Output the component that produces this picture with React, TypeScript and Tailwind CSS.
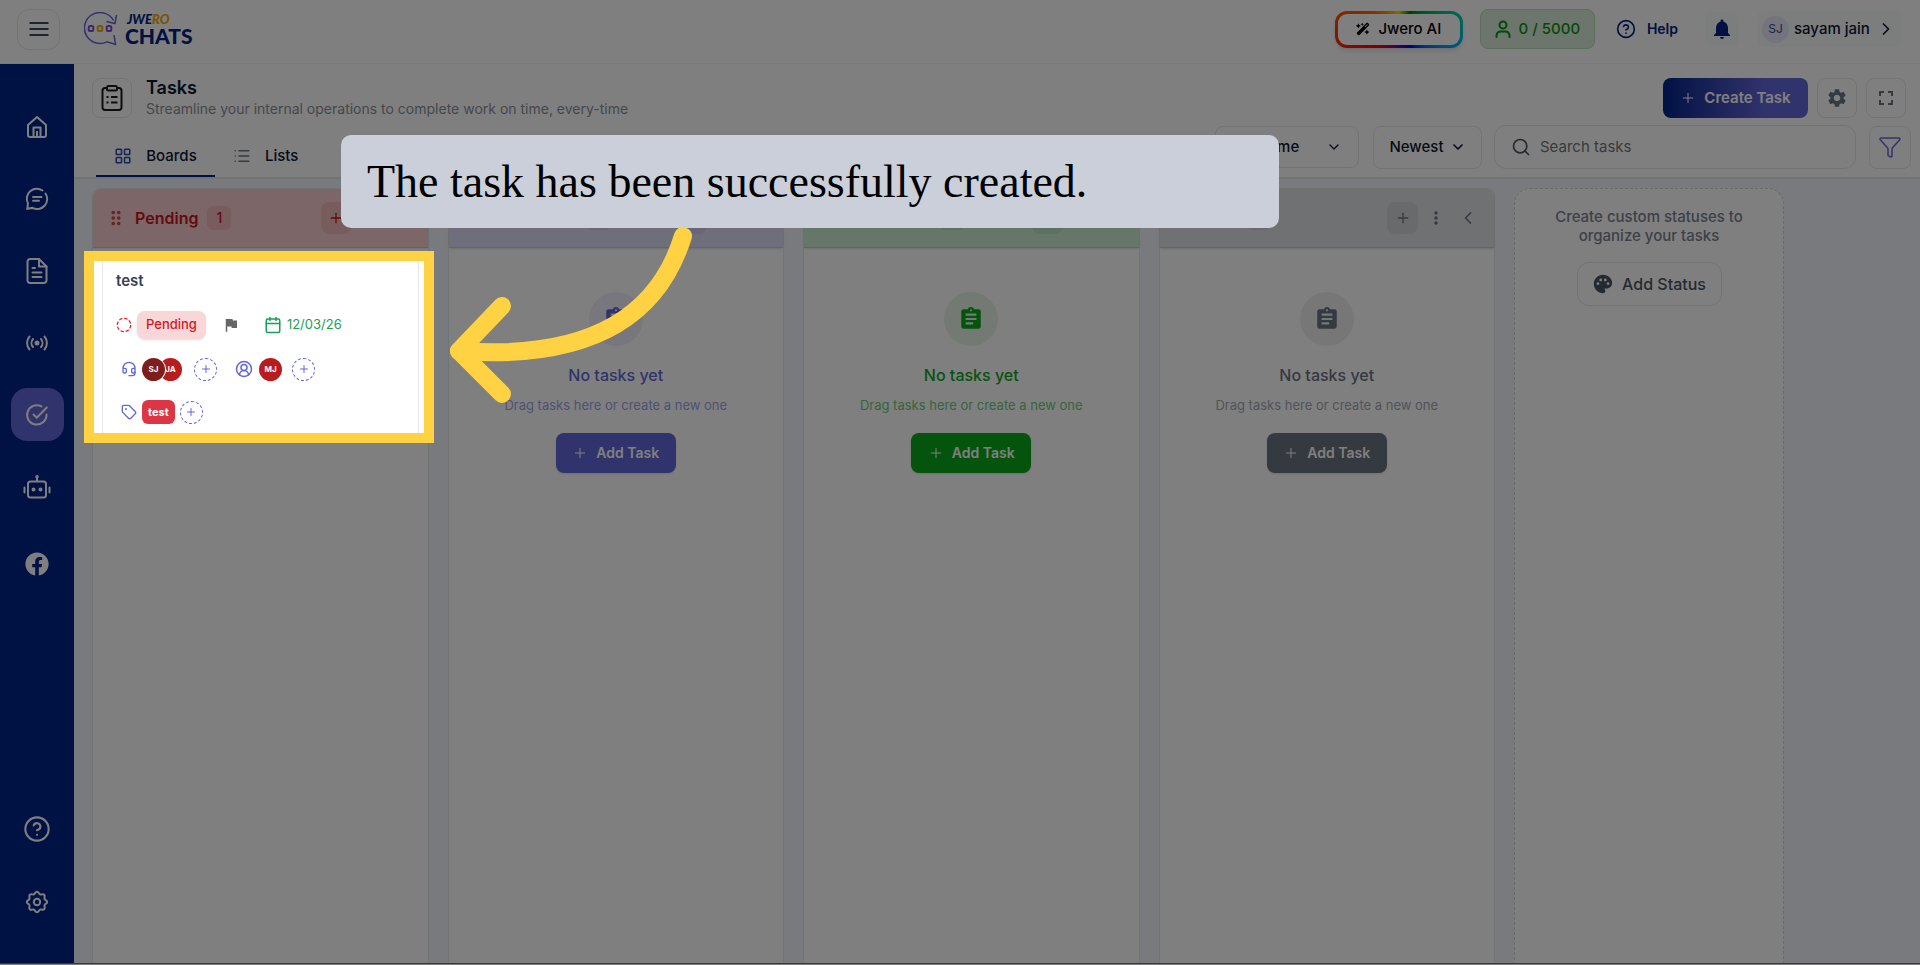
import type { ReactNode } from "react";
import {
  Calendar,
  ChevronDown,
  ChevronLeft,
  ChevronRight,
  CircleHelp,
  CircleUserRound,
  Funnel,
  Headset,
  LayoutGrid,
  List,
  Plus,
  Search,
  Tag,
} from "lucide-react";
import { FaFacebook } from "react-icons/fa";
import { FaWandMagicSparkles } from "react-icons/fa6";
import {
  MdAssignment,
  MdDragIndicator,
  MdFlag,
  MdFullscreen,
  MdMoreVert,
  MdNotifications,
  MdPalette,
  MdSettings,
} from "react-icons/md";

const HomeIcon = () => (
  <svg viewBox="0 0 24 24" className="size-6" fill="none" stroke="currentColor" strokeWidth="2" strokeLinejoin="round">
    <path d="M3 10 12 2l9 8v10a2 2 0 0 1-2 2H5a2 2 0 0 1-2-2z" />
    <path d="M8.500 22v-9.500h7V22M12 16v6" />
  </svg>
);

const ChatIcon = () => (
  <svg viewBox="0 0 24 24" className="size-6" fill="none" stroke="currentColor" strokeWidth="2" strokeLinecap="round">
    <path d="M17.500 3.500A10 10 0 0 0 3 16.500L2.300 21.700l5.200-.8A10 10 0 0 0 20.500 6.500" />
    <path d="M8 10h8.500M8 13.800h6" />
  </svg>
);

const DocIcon = () => (
  <svg viewBox="0 0 24 28" className="h-7 w-6" fill="none" stroke="currentColor" strokeWidth="2" strokeLinecap="round" strokeLinejoin="round">
    <path d="M14 2H5a2.500 2.500 0 0 0-2.500 2.500v19A2.500 2.500 0 0 0 5 26h14a2.500 2.500 0 0 0 2.500-2.500V9.500z" />
    <path d="M14 2v7.500h7.500M7.500 11h2.500M7.500 15.500h9M7.500 20h9" />
  </svg>
);

const BroadcastIcon = () => (
  <svg viewBox="0 0 24 24" className="size-6" fill="none" stroke="currentColor" strokeWidth="2" strokeLinecap="round">
    <circle cx="12" cy="12" r="1.500" fill="currentColor" />
    <path d="M8 8a6 6 0 0 0 0 8M16 8a6 6 0 0 1 0 8M4.500 5.500a10 10 0 0 0 0 13M19.500 5.500a10 10 0 0 1 0 13" />
  </svg>
);

const TaskIcon = () => (
  <svg viewBox="0 0 24 24" className="size-6" fill="none" stroke="currentColor" strokeWidth="2" strokeLinecap="round" strokeLinejoin="round">
    <path d="M21.500 11.500A9.700 9.700 0 1 1 16.500 3.400" />
    <path d="m8.500 11.500 3.200 3.300L21.800 4.500" />
  </svg>
);

const BotIcon = () => (
  <svg viewBox="0 0 28 24" className="h-6 w-7" fill="none" stroke="currentColor" strokeWidth="2" strokeLinecap="round">
    <rect x="5" y="6.500" width="18" height="16" rx="2.500" />
    <path d="M14 6V2.500M1.500 12.500v5M26.500 12.500v5" />
    <circle cx="14" cy="1.800" r=".8" />
    <circle cx="10.500" cy="14.500" r="1" fill="currentColor" />
    <circle cx="17.500" cy="14.500" r="1" fill="currentColor" />
  </svg>
);

const GearIcon = () => (
  <svg viewBox="0 0 24 24" className="size-6" fill="none" stroke="currentColor" strokeWidth="2" strokeLinejoin="round">
    <path d="M8.900 4.400C10.200 4 10 1.800 12 1.800s1.800 2.200 3.100 2.600c1.200.6 2.700-1.100 4.100.4s-.3 2.900.4 4.100c.4 1.300 2.600 1.100 2.600 3.100s-2.200 1.800-2.600 3.100c-.7 1.200 1.100 2.700-.4 4.100s-2.900-.3-4.100.4c-1.300.4-1.100 2.600-3.100 2.600s-1.800-2.200-3.100-2.600c-1.200-.7-2.700 1.100-4.100-.4s.3-2.900-.4-4.100c-.4-1.300-2.600-1.100-2.600-3.100s2.200-1.800 2.600-3.100c.7-1.200-1.100-2.700.4-4.100s2.900.2 4.100-.4z" />
    <circle cx="12" cy="12" r="3.200" />
  </svg>
);

const ClipboardIcon = () => (
  <svg viewBox="0 0 24 28" className="h-7 w-6" fill="none" stroke="currentColor" strokeWidth="2">
    <path d="M7 4H5a2.500 2.500 0 0 0-2.500 2.500v17A2.500 2.500 0 0 0 5 26h14a2.500 2.500 0 0 0 2.500-2.500v-17A2.500 2.500 0 0 0 19 4h-2" />
    <rect x="7" y="2" width="10" height="4.500" rx="1.500" />
    <path d="M6.500 13h2M11 13h6.500M6.500 18.500h2M11 18.500h6.500" />
  </svg>
);

const Logo = () => (
  <a href="#" aria-label="Jwero Chats" className="flex items-center gap-[7px]">
    <svg viewBox="0 0 34 34" className="size-[34px]" fill="none" strokeWidth="1.500">
      <path d="M29.500 8.500A15.500 15.500 0 1 0 23 29.800l8.500 2.700-1.500-9.500" stroke="#6366d8" />
      <path d="m22.500 9.500 8.500 2L32.500 3" stroke="#6366d8" />
      <rect x="4.700" y="14" width="4.600" height="5" rx="1.500" stroke="#7c4fd0" strokeWidth="2" />
      <rect x="13.700" y="14" width="4.600" height="5" rx="1.500" stroke="#f5a800" strokeWidth="2" />
      <rect x="22.700" y="14" width="4.600" height="5" rx="1.500" stroke="#7c4fd0" strokeWidth="2" />
    </svg>
    <span className="flex flex-col font-[Lato] font-black text-[#002288]">
      <span className="pl-[2px] text-[13px] leading-[14px] italic">
        JWE<span className="text-[#f5a800]">RO</span>
      </span>
      <span className="text-[21px] leading-5">CHATS</span>
    </span>
  </a>
);

const navItems = [
  { label: "Home", icon: <HomeIcon /> },
  { label: "Chats", icon: <ChatIcon /> },
  { label: "Templates", icon: <DocIcon /> },
  { label: "Broadcast", icon: <BroadcastIcon /> },
  { label: "Tasks", icon: <TaskIcon />, active: true },
  { label: "Bots", icon: <BotIcon /> },
];

const NavLink = ({ label, active, children }: { label: string; active?: boolean; children: ReactNode }) => (
  <a
    href="#"
    aria-label={label}
    className={`flex size-[53px] items-center justify-center rounded-2xl ${active ? "bg-[#6366d8]" : ""}`}
  >
    {children}
  </a>
);

interface Column {
  title: string;
  head: string;
  text: string;
  muted: string;
  chip: string;
  circle: string;
  button: string;
  count: number;
}

const columns: Column[] = [
  {
    title: "Pending",
    head: "bg-[#f8cdcf]",
    text: "text-[#c9151b]",
    muted: "",
    chip: "bg-[#f0b9bc]",
    circle: "",
    button: "",
    count: 1,
  },
  {
    title: "In Progress",
    head: "bg-[#dfdff7]",
    text: "text-[#6366d8]",
    muted: "text-[#a0a2e8]",
    chip: "bg-[#cfcff2]",
    circle: "bg-[#eeeefb]",
    button: "bg-[#6366d8]",
    count: 0,
  },
  {
    title: "Completed",
    head: "bg-[#cdedd2]",
    text: "text-[#0aa81c]",
    muted: "text-[#6ccb77]",
    chip: "bg-[#b9e2bf]",
    circle: "bg-[#e4f4e6]",
    button: "bg-[#0aa81c]",
    count: 0,
  },
  {
    title: "Hold",
    head: "bg-[#e0e2e5]",
    text: "text-[#6b7280]",
    muted: "text-[#a3a8b1]",
    chip: "bg-[#d3d5d9]",
    circle: "bg-[#efeff1]",
    button: "bg-[#6b7280]",
    count: 0,
  },
];

const AddCircle = ({ label }: { label: string }) => (
  <button
    aria-label={label}
    className="flex size-[23px] items-center justify-center rounded-full border border-dashed border-[#6366d8] text-[#6366d8]"
  >
    <Plus className="size-3" />
  </button>
);

const Avatar = ({ name, className }: { name: string; className: string }) => (
  <span className={`flex size-[23px] items-center justify-center rounded-full text-[8px] font-bold text-white ${className}`}>
    {name}
  </span>
);

const TaskCard = () => (
  <article className="mx-[9px] mt-1 flex h-[190px] flex-col rounded-lg border border-gray-200 bg-white px-[13px] pt-4">
    <h3 className="text-[15px] leading-6 font-semibold text-gray-700">test</h3>

    <div className="mt-[18px] flex h-7 items-center">
      <svg viewBox="0 0 16 16" className="size-4" fill="none" stroke="#dc2626" strokeWidth="1.300">
        <circle cx="8" cy="8" r="6.700" strokeDasharray="3.500 1.760" />
      </svg>
      <span className="ml-[5px] flex h-7 items-center rounded-lg bg-[#f9d7d9] px-[9px] text-[13px] font-medium text-[#d0181e] shadow-sm">
        Pending
      </span>
      <MdFlag className="ml-4 size-[18px] text-[#666]" />
      <Calendar className="ml-6 size-[18px] text-[#16a05a]" />
      <span className="ml-[5px] text-[13px] text-[#16a05a]">12/03/26</span>
    </div>

    <div className="mt-[18px] flex h-6 items-center pl-[5px]">
      <Headset className="size-4 text-[#6366d8]" />
      <Avatar name="SJ" className="relative ml-[5px] bg-[#7f1d1d] ring-1 ring-white" />
      <Avatar name="JA" className="-ml-[6px] bg-[#b91c1c]" />
      <span className="w-3" />
      <AddCircle label="Add agent" />
      <CircleUserRound className="ml-[18px] size-[18px] text-[#6366d8]" />
      <span className="w-[6px]" />
      <Avatar name="MJ" className="bg-[#b91c1c]" />
      <span className="w-[10px]" />
      <AddCircle label="Add customer" />
    </div>

    <div className="mt-[19px] flex h-6 items-center gap-[5px] pl-[5px]">
      <Tag className="size-4 text-[#6366d8]" />
      <span className="flex h-6 items-center rounded-md bg-[#dc3545] px-[6px] text-[11px] font-bold text-white">test</span>
      <AddCircle label="Add tag" />
    </div>
  </article>
);

const BoardColumn = ({ column }: { column: Column }) => (
  <section className="flex flex-1 flex-col rounded-t-lg border border-b-0 border-gray-200 bg-white">
    <header className={`flex h-[59px] shrink-0 items-center rounded-t-lg border-b border-black/10 pr-4 pl-3 shadow-sm ${column.head} ${column.text}`}>
      <MdDragIndicator className="size-[22px] opacity-70" />
      <h2 className="ml-2 text-base font-semibold">{column.title}</h2>
      <span className={`ml-[9px] flex size-6 items-center justify-center rounded-md text-sm font-medium ${column.chip}`}>
        {column.count}
      </span>
      <button aria-label="Add task" className={`ml-auto flex h-8 w-[31px] items-center justify-center rounded-lg ${column.chip}`}>
        <Plus className="size-4" />
      </button>
      <button aria-label="More" className="ml-2">
        <MdMoreVert className="size-5" />
      </button>
      <button aria-label="Collapse" className="ml-3">
        <ChevronLeft className="size-5" />
      </button>
    </header>

    {column.count > 0 ? (
      <TaskCard />
    ) : (
      <div className="flex flex-col items-center pt-11">
        <span className={`flex size-[54px] items-center justify-center rounded-full ${column.circle} ${column.text}`}>
          <MdAssignment className="size-[26px]" />
        </span>
        <p className={`mt-[17px] text-base font-medium ${column.text}`}>No tasks yet</p>
        <p className={`mt-2 text-[13px] leading-5 ${column.muted}`}>Drag tasks here or create a new one</p>
        <button className={`mt-[18px] flex h-10 w-[120px] items-center justify-center gap-2 rounded-lg text-sm font-semibold text-white shadow ${column.button}`}>
          <Plus className="size-4" strokeWidth={1.5} />
          Add Task
        </button>
      </div>
    )}
  </section>
);

function App() {
  return (
    <div className="relative flex min-h-screen flex-col overflow-hidden bg-white font-[Inter,sans-serif] text-[#0b1733]">
      {/* Top bar */}
      <header className="flex h-[64px] items-center border-b border-gray-100 pr-[18px] pb-[5px] pl-[17px]">
        <button aria-label="Menu" className="flex h-[41px] w-[43px] items-center justify-center rounded-xl border border-gray-200">
          <svg viewBox="0 0 20 16" className="h-4 w-5" stroke="#3b4a66" strokeWidth="2">
            <path d="M.5 2h19M.5 8h19M.5 14h19" />
          </svg>
        </button>
        <div className="ml-6">
          <Logo />
        </div>

        <div className="ml-auto flex items-center">
          <button className="rounded-xl bg-[conic-gradient(#ffe000,#008000_33deg,#00d0a0_75deg,#00b0f0_105deg,#0000ff_147deg,#8000a0_190deg,#ff0000_235deg,#ff6600_300deg,#ffe000)] p-[3px] shadow-md">
            <span className="flex h-[31px] w-[122px] items-center justify-center gap-2 rounded-[9px] bg-white text-[15px] font-medium text-black">
              <FaWandMagicSparkles className="size-[14px]" />
              Jwero AI
            </span>
          </button>
          <div className="ml-[17px] flex h-10 w-[115px] items-center justify-center gap-2 rounded-lg border border-[#b5dfb9] bg-[#d8edda] text-[15px] font-medium text-[#07930f]">
            <svg viewBox="0 0 16 18" className="h-[18px] w-4" fill="none" stroke="currentColor" strokeWidth="2">
              <circle cx="8" cy="5" r="3.500" />
              <path d="M1.500 17v-1.500A4.500 4.500 0 0 1 6 11.500h4a4.500 4.500 0 0 1 4.500 4V17" strokeLinecap="round" />
            </svg>
            0 / 5000
          </div>
          <a href="#" className="ml-[21px] flex items-center gap-[11px] text-sm font-semibold text-[#002288]">
            <CircleHelp className="size-5" />
            Help
          </a>
          <button aria-label="Notifications" className="ml-[27px] flex size-[34px] items-center justify-center rounded-lg bg-gray-50 text-[#002288]">
            <MdNotifications className="size-6" />
          </button>
          <button className="ml-[18px] flex h-9 w-[145px] items-center rounded-lg bg-gray-50 pl-[5px] text-[15px] font-medium">
            <span className="flex size-[27px] shrink-0 items-center justify-center rounded-full bg-[#e6e8fa] text-xs font-normal text-[#3b4a8a]">SJ</span>
            <span className="ml-[5px] whitespace-nowrap">sayam jain</span>
            <ChevronRight className="ml-[6px] size-5 shrink-0" />
          </button>
        </div>
      </header>

      <div className="mb-px flex flex-1 border-b border-gray-500">
        {/* Sidebar */}
        <nav className="flex w-[74px] shrink-0 flex-col items-center bg-[#002288] pt-9 pb-[35px] text-white">
          <div className="flex flex-col gap-[19px]">
            {navItems.map((item) => (
              <NavLink key={item.label} label={item.label} active={item.active}>
                {item.icon}
              </NavLink>
            ))}
          </div>
          <div className="mt-6">
            <NavLink label="Facebook">
              <FaFacebook className="size-6" />
            </NavLink>
          </div>
          <div className="mt-auto flex flex-col gap-5">
            <NavLink label="Help">
              <CircleHelp className="size-7" strokeWidth={1.8} />
            </NavLink>
            <NavLink label="Settings">
              <GearIcon />
            </NavLink>
          </div>
        </nav>

        <main className="flex min-w-0 flex-1 flex-col">
          {/* Page heading */}
          <div className="flex items-center pt-[13px] pr-[14px] pl-[18px]">
            <span className="flex size-10 items-center justify-center rounded-lg border border-gray-200 text-[#1a1a1a]">
              <ClipboardIcon />
            </span>
            <div className="ml-[14px]">
              <h1 className="text-lg leading-[22px] font-semibold">Tasks</h1>
              <p className="text-sm leading-5 text-[#8b8f98]">
                Streamline your internal operations to complete work on time, every-time
              </p>
            </div>
            <button className="ml-auto flex h-10 w-[145px] items-center justify-center gap-2 rounded-lg bg-linear-to-r from-[#002288] to-[#6366d8] to-70% text-[15px] font-semibold text-white">
              <Plus className="size-4" strokeWidth={1.5} />
              Create Task
            </button>
            <button aria-label="Settings" className="ml-[9px] flex size-10 items-center justify-center rounded-lg border border-gray-200 text-[#6b7280]">
              <MdSettings className="size-[22px]" />
            </button>
            <button aria-label="Full screen" className="ml-[9px] flex size-10 items-center justify-center rounded-lg border border-gray-200 text-[#6b7280]">
              <MdFullscreen className="size-6" />
            </button>
          </div>

          {/* Tabs and filters */}
          <div className="flex h-[60px] items-end border-b-2 border-gray-200 pr-[9px] pl-[22px]">
            <div className="flex text-[15px] font-medium">
              <button className="flex h-10 w-[119px] items-center justify-center gap-[14px] border-b-2 border-[#002288]">
                <LayoutGrid className="size-[18px] text-[#2b44a8]" />
                Boards
              </button>
              <button className="ml-[18px] flex h-10 items-center gap-[14px] border-b-2 border-transparent">
                <List className="size-[18px] text-[#6b7280]" />
                Lists
              </button>
            </div>
            <div className="mb-2 ml-auto flex items-center text-[15px]">
              <button className="flex h-[42px] w-36 items-center justify-between rounded-lg border border-gray-200 pr-4 pl-[30px] font-medium">
                All time
                <ChevronDown className="size-4" />
              </button>
              <button className="ml-[14px] flex h-[43px] w-[109px] items-center justify-center gap-[6px] rounded-lg border border-gray-200 font-medium">
                Newest
                <ChevronDown className="size-4" strokeWidth={2.5} />
              </button>
              <label className="ml-3 flex h-11 w-[362px] items-center gap-[9px] rounded-xl border border-gray-200 pl-4">
                <Search className="size-5 text-[#4b5563]" />
                <input type="search" placeholder="Search tasks" aria-label="Search tasks" className="w-64 outline-none placeholder:text-[#757575]" />
              </label>
              <button aria-label="Filter" className="ml-[13px] flex h-[43px] w-[42px] items-center justify-center rounded-lg border border-gray-200 text-[#6366d8]">
                <Funnel className="size-6" strokeWidth={1.5} />
              </button>
            </div>
          </div>

          {/* Board */}
          <div className="flex flex-1 gap-[19px] bg-[#f3f5fa] pt-[9px] pr-[136px] pl-[18px]">
            {columns.map((column) => (
              <BoardColumn key={column.title} column={column} />
            ))}
            <section className="flex w-[270px] shrink-0 flex-col items-center rounded-t-2xl border border-b-0 border-dashed border-gray-300 bg-white pt-[18px]">
              <p className="w-52 text-center text-[15px] leading-[19px] font-medium text-[#7b8190]">
                Create custom statuses to organize your tasks
              </p>
              <button className="mt-[17px] flex h-11 w-[145px] items-center justify-center gap-2 rounded-xl border border-gray-200 text-base font-medium text-[#4b5563]">
                <MdPalette className="size-[22px]" />
                Add Status
              </button>
            </section>
          </div>
        </main>
      </div>

      {/* Walkthrough layer: spotlight, arrow and message */}
      <div className="pointer-events-none absolute top-[251px] left-[84px] h-[192px] w-[350px] border-[10px] border-[#ffd243] shadow-[0_0_0_2000px_rgba(0,0,0,0.5)]" />
      <div role="status" className="absolute top-[135px] left-[341px] flex h-[93px] w-[938px] items-center rounded-[10px] bg-[#cbcfd9] pl-[26px] font-['Liberation_Serif',serif] text-[46px] text-black">
        The task has been successfully created.
      </div>
      <svg viewBox="0 0 250 185" className="pointer-events-none absolute top-[223px] left-[445px] h-[185px] w-[250px]" fill="none" stroke="#ffd243" strokeWidth="18" strokeLinecap="round" strokeLinejoin="round">
        <path d="M238 13C215 88 152 138 14 128" />
        <path d="M57 83 14 128l43 43" />
      </svg>
    </div>
  );
}

export default App;
